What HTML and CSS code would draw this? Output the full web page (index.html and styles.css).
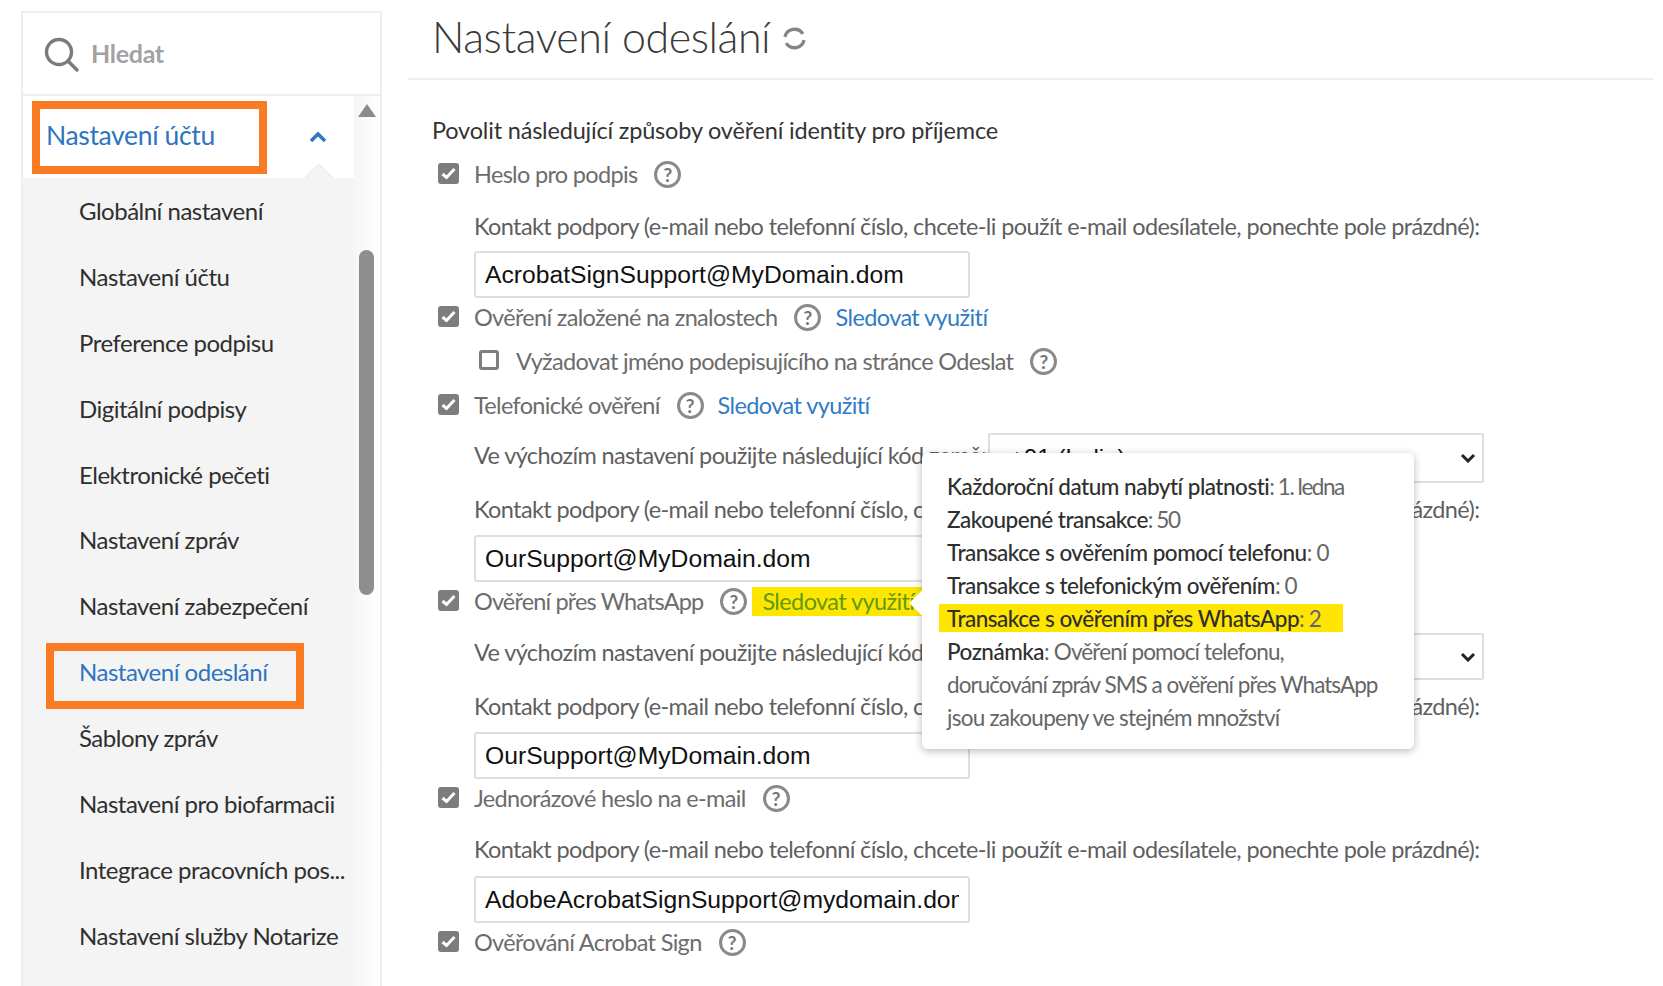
FILE: index.html
```html
<!DOCTYPE html>
<html lang="cs">
<head>
<meta charset="utf-8">
<title>Nastavení odeslání</title>
<link rel="stylesheet" href="styles.css">
</head>
<body>
<div class="page">
  <aside class="sidebar">
    <div class="search">
      <svg class="search-icon" viewBox="0 0 36 36"><circle cx="15" cy="15" r="12.5"/><path d="M24 24l9 9"/></svg>
      <span class="search-text">Hledat</span>
    </div>
    <div class="menu">
      <nav class="menu-list">
        <div class="acct-head">
          <div class="acct-box">Nastavení účtu</div>
          <svg class="chevron" viewBox="0 0 18 12"><path d="M2 10l7-7 7 7"/></svg>
        </div>
        <ul class="items">
          <li class="item">Globální nastavení</li>
          <li class="item">Nastavení účtu</li>
          <li class="item">Preference podpisu</li>
          <li class="item">Digitální podpisy</li>
          <li class="item">Elektronické pečeti</li>
          <li class="item">Nastavení zpráv</li>
          <li class="item">Nastavení zabezpečení</li>
          <li class="item item-active">Nastavení odeslání<span class="annot"></span></li>
          <li class="item">Šablony zpráv</li>
          <li class="item">Nastavení pro biofarmacii</li>
          <li class="item">Integrace pracovních pos...</li>
          <li class="item">Nastavení služby Notarize</li>
        </ul>
      </nav>
      <div class="scrollbar">
        <span class="scroll-up"></span>
        <span class="scroll-thumb"></span>
      </div>
    </div>
  </aside>
  <main class="main">
    <header class="head">
      <h1 class="title">Nastavení odeslání</h1>
      <svg class="refresh" viewBox="0 0 24 24"><path d="M2.8 10.5A9.5 9.5 0 0 1 20 7.5"/><path d="M21.2 13.5A9.5 9.5 0 0 1 4 16.5"/></svg>
    </header>
    <div class="form">
      <div class="heading">Povolit následující způsoby ověření identity pro příjemce</div>

      <div class="row r50"><svg class="cb" viewBox="0 0 21 21"><rect width="21" height="21" rx="3"/><path d="M4.5 11l4 3.5 8-8.5"/></svg><span class="lbl">Heslo pro podpis</span><span class="help">?</span></div>
      <div class="sub r51">Kontakt podpory (e-mail nebo telefonní číslo, chcete-li použít e-mail odesílatele, ponechte pole prázdné):</div>
      <div class="field"><span class="field-text">AcrobatSignSupport@MyDomain.dom</span></div>

      <div class="row r40"><svg class="cb" viewBox="0 0 21 21"><rect width="21" height="21" rx="3"/><path d="M4.5 11l4 3.5 8-8.5"/></svg><span class="lbl">Ověření založené na znalostech</span><span class="help">?</span><span class="link">Sledovat využití</span></div>
      <div class="row r48 nested"><span class="cb-empty"></span><span class="lbl">Vyžadovat jméno podepisujícího na stránce Odeslat</span><span class="help">?</span></div>
      <div class="row r40"><svg class="cb" viewBox="0 0 21 21"><rect width="21" height="21" rx="3"/><path d="M4.5 11l4 3.5 8-8.5"/></svg><span class="lbl">Telefonické ověření</span><span class="help">?</span><span class="link">Sledovat využití</span></div>

      <div class="select-row gap7"><span class="sub-inline">Ve výchozím nastavení použijte následující kód země:</span><div class="select"><span class="select-text">+91 (India)</span><svg class="caret" viewBox="0 0 16 10"><path d="M2 2l6 6 6-6"/></svg></div></div>
      <div class="sub r52">Kontakt podpory (e-mail nebo telefonní číslo, chcete-li použít e-mail odesílatele, ponechte pole prázdné):</div>
      <div class="field"><span class="field-text">OurSupport@MyDomain.dom</span></div>

      <div class="row r40"><svg class="cb" viewBox="0 0 21 21"><rect width="21" height="21" rx="3"/><path d="M4.5 11l4 3.5 8-8.5"/></svg><span class="lbl lbl-tight">Ověření přes WhatsApp</span><span class="help">?</span><span class="link link-marked">Sledovat využití</span></div>

      <div class="select-row gap11"><span class="sub-inline">Ve výchozím nastavení použijte následující kód země:</span><div class="select"><span class="select-text">+91 (India)</span><svg class="caret" viewBox="0 0 16 10"><path d="M2 2l6 6 6-6"/></svg></div></div>
      <div class="sub r52">Kontakt podpory (e-mail nebo telefonní číslo, chcete-li použít e-mail odesílatele, ponechte pole prázdné):</div>
      <div class="field"><span class="field-text">OurSupport@MyDomain.dom</span></div>

      <div class="row r40"><svg class="cb" viewBox="0 0 21 21"><rect width="21" height="21" rx="3"/><path d="M4.5 11l4 3.5 8-8.5"/></svg><span class="lbl">Jednorázové heslo na e-mail</span><span class="help">?</span></div>
      <div class="sub r57">Kontakt podpory (e-mail nebo telefonní číslo, chcete-li použít e-mail odesílatele, ponechte pole prázdné):</div>
      <div class="field"><span class="field-text">AdobeAcrobatSignSupport@mydomain.dom</span></div>

      <div class="row r40"><svg class="cb" viewBox="0 0 21 21"><rect width="21" height="21" rx="3"/><path d="M4.5 11l4 3.5 8-8.5"/></svg><span class="lbl">Ověřování Acrobat Sign</span><span class="help">?</span></div>
    </div>

    <div class="tooltip">
      <span class="tip-arrow"></span>
      <p class="tip-line tip-date"><b>Každoroční datum nabytí platnosti</b>: 1. ledna</p>
      <p class="tip-line tip-date"><b>Zakoupené transakce</b>: 50</p>
      <p class="tip-line"><b>Transakce s ověřením pomocí telefonu</b>: 0</p>
      <p class="tip-line"><b>Transakce s telefonickým ověřením</b>: 0</p>
      <p class="tip-line tip-mark"><b>Transakce s ověřením přes WhatsApp</b>: 2</p>
      <p class="tip-line"><b>Poznámka</b>: Ověření pomocí telefonu,</p>
      <p class="tip-line tip-tight">doručování zpráv SMS a ověření přes WhatsApp</p>
      <p class="tip-line tip-loose">jsou zakoupeny ve stejném množství</p>
    </div>
  </main>
</div>
</body>
</html>
```

FILE: styles.css
```css
* { box-sizing: border-box; }
html, body { margin: 0; padding: 0; background: #fff; }
body { font-family: "Lato", "Open Sans", sans-serif; color: #4b4b4b; overflow: hidden; }
.page { display: flex; width: 1663px; height: 986px; overflow: hidden; }

.sidebar { width: 361px; margin: 11px 0 0 21px; border: 2px solid #eeeeee; border-bottom: 0; display: flex; flex-direction: column; flex: none; }
.search { height: 83px; border-bottom: 2px solid #eeeeee; display: flex; align-items: center; padding-left: 21px; flex: none; }
.search-icon { width: 36px; height: 36px; fill: none; stroke: #7b7b7b; stroke-width: 3.4; stroke-linecap: round; margin-right: 11px; margin-top: 2px; }
.search-text { font-size: 25px; font-weight: 700; color: #a2a2a2; letter-spacing: -0.3px; margin-top: -2px; }
.menu { display: flex; flex: 1; min-height: 0; }
.menu-list { width: 331px; flex: none; display: flex; flex-direction: column; }
.acct-head { height: 82px; flex: none; padding: 5px 0 0 9px; display: flex; align-items: flex-start; position: relative; }
.acct-head::after { content: ""; position: absolute; left: 286px; bottom: -1px; width: 20px; height: 20px; background: #f4f4f4; transform: translateY(10px) rotate(45deg); box-shadow: -1px -1px 1px #e8e8e8; }
.acct-box { width: 235px; height: 73px; border: 8px solid #f97c24; font-size: 26.5px; color: #2e74c0; padding: 0 0 0 6px; line-height: 52px; letter-spacing: -0.35px; white-space: nowrap; }
.chevron { width: 18px; height: 12px; margin: 30px 0 0 42px; fill: none; stroke: #2b78c2; stroke-width: 3.5; }
.items { list-style: none; margin: 0; padding: 0; background: #f4f4f4; flex: 1; position: relative; z-index: 1; }
.item { height: 65.9px; line-height: 65px; padding-left: 56px; font-size: 24px; color: #2f2f2f; letter-spacing: -0.5px; white-space: nowrap; position: relative; }
.item-active { color: #2e74c0; }
.annot { position: absolute; left: 23px; top: 4px; width: 258px; height: 66px; border: 8px solid #f97c24; }
.scrollbar { flex: 1; position: relative; background: linear-gradient(to right, #f6f6f6, #ffffff); }
.scroll-up { position: absolute; left: 4px; top: 8px; width: 0; height: 0; border-left: 9px solid transparent; border-right: 9px solid transparent; border-bottom: 13px solid #8b8b8b; }
.scroll-thumb { position: absolute; left: 5px; top: 154px; width: 15px; height: 345px; border-radius: 8px; background: #8e8e8e; }

.main { flex: 1; min-width: 0; position: relative; margin: 0 10px 0 26px; }
.head { height: 80px; border-bottom: 2px solid #eeeeee; display: flex; align-items: center; padding: 0 0 6px 24px; }
.title { margin: 0; font-size: 43px; font-weight: 300; color: #3a3a3a; letter-spacing: -0.45px; white-space: nowrap; }
.refresh { width: 25px; height: 25px; margin: 4px 0 0 12px; fill: none; stroke: #858585; stroke-width: 3.2; }
.form { padding: 30px 0 0 25px; display: flex; flex-direction: column; }
.heading { height: 40px; line-height: 40px; font-size: 23.5px; color: #333; letter-spacing: -0.19px; white-space: nowrap; margin-left: -1px; }
.row { display: flex; align-items: center; padding: 0 0 2px 5px; white-space: nowrap; }
.nested { padding-left: 46px; }
.r40 { height: 40px; } .r48 { height: 48px; } .r50 { height: 50px; }
.cb { width: 21px; height: 21px; flex: none; margin: -1.5px 15px 0 0; }
.cb rect { fill: #7d7d7d; }
.cb path { fill: none; stroke: #fff; stroke-width: 3; }
.cb-empty { width: 20px; height: 20px; flex: none; border: 3px solid #7d7d7d; border-radius: 3px; margin-right: 17px; margin-top: -3px; }
.lbl { font-size: 23.5px; color: #6c6c6c; letter-spacing: -0.68px; }
.lbl-tight { letter-spacing: -0.85px; }
.help { width: 27px; height: 27px; border: 3px solid #8a8a8a; border-radius: 50%; margin-left: 17px; font-size: 19px; font-weight: 700; color: #757575; line-height: 21px; text-align: center; flex: none; }
.link { font-size: 23.5px; color: #2f7cc4; margin-left: 14px; letter-spacing: -0.6px; }
.link-marked { background: #ffe600; color: #5f9a10; padding: 0 10px; height: 29px; line-height: 28px; margin-left: 5px; }
.sub, .sub-inline { font-size: 23.5px; color: #5f5f5f; letter-spacing: -0.62px; white-space: nowrap; }
.sub { padding-left: 41px; display: flex; align-items: center; }
.r51 { height: 51px; } .r52 { height: 52px; } .r57 { height: 57px; padding-top: 2px; }
.field { margin-left: 41px; width: 496px; height: 47px; flex: none; border: 2px solid #dedede; border-radius: 3px; padding: 0 9px; font-family: "Liberation Sans", Arial, sans-serif; font-size: 24.7px; line-height: 43px; color: #111; white-space: nowrap; }
.field-text { display: block; overflow: hidden; }
.select-row { display: flex; align-items: center; padding-left: 41px; height: 50px; white-space: nowrap; }
.gap7 { margin-top: 7px; } .gap11 { margin-top: 11px; height: 47px; }
.sub-inline { width: 514px; flex: none; overflow: hidden; }
.gap7 .sub-inline { padding-bottom: 6px; }
.gap11 .sub-inline { padding-bottom: 10px; }
.select { width: 496px; height: 100%; border: 2px solid #dedede; border-radius: 2px; flex: none; display: flex; align-items: center; justify-content: space-between; padding: 0 6px 0 20px; font-family: "Liberation Sans", Arial, sans-serif; font-size: 24px; color: #111; }
.caret { width: 16px; height: 10px; fill: none; stroke: #222; stroke-width: 3; }

.tooltip { position: absolute; left: 514px; top: 453px; width: 492px; height: 296px; background: #fff; border-radius: 6px; box-shadow: 0 2px 8px rgba(0,0,0,.28); padding: 16.5px 0 0 25px; }
.tip-arrow { position: absolute; left: -9px; top: 141px; width: 18px; height: 18px; background: #fff; transform: rotate(45deg); }
.tip-line { position: relative; margin: 0; height: 33.1px; line-height: 33.1px; font-size: 22.5px; color: #666; letter-spacing: -0.85px; white-space: nowrap; }
.tip-line b { font-weight: 500; color: #2f2f2f; letter-spacing: -0.5px; }
.tip-date { letter-spacing: -1.45px; }
.tip-tight { letter-spacing: -0.97px; }
.tip-loose { letter-spacing: -0.75px; }
.tip-mark { background: #ffe600; margin-left: -8px; padding-left: 8px; width: 404px; height: 28px; line-height: 30px; margin-top: 2px; margin-bottom: 3.1px; }
```
